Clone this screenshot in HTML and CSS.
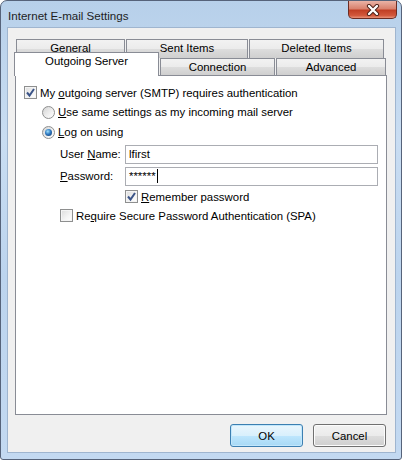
FILE: index.html
```html
<!DOCTYPE html>
<html lang="en">
<head>
<meta charset="UTF-8">
<title>Internet E-mail Settings</title>
<link rel="stylesheet" href="styles.css">
</head>
<body>

<div class="window">
  <div class="titlebar">
    <span class="title">Internet E-mail Settings</span>
    <div class="close">
      <svg width="16" height="12" viewBox="0 0 16 12">
        <path d="M4 2 L12 10 M12 2 L4 10" stroke="#4a1e16" stroke-width="4.2" stroke-linecap="round"/>
        <path d="M4 2 L12 10 M12 2 L4 10" stroke="#ffffff" stroke-width="2.4" stroke-linecap="round"/>
      </svg>
    </div>
  </div>

  <div class="client">
    <div class="tabs">
      <div class="tabrow back">
        <div class="tab t-general">General</div>
        <div class="tab t-sent">Sent Items</div>
        <div class="tab t-deleted">Deleted Items</div>
      </div>
      <div class="tabrow front">
        <div class="tab t-outgoing selected">Outgoing Server</div>
        <div class="tab t-connection">Connection</div>
        <div class="tab t-advanced">Advanced</div>
      </div>

      <div class="panel">
        <div class="line l-auth">
          <span class="chk checked">
            <svg width="11" height="11" viewBox="0 0 11 11"><path d="M2 5.5 L4.5 8.5 L9 2" fill="none" stroke="#3b5488" stroke-width="2"/></svg>
          </span>
          <span class="lbl">My <u>o</u>utgoing server (SMTP) requires authentication</span>
        </div>
        <div class="line l-radio">
          <span class="radio"></span>
          <span class="lbl"><u>U</u>se same settings as my incoming mail server</span>
        </div>
        <div class="line l-radio">
          <span class="radio on"><span class="dot"></span></span>
          <span class="lbl"><u>L</u>og on using</span>
        </div>
        <div class="field first">
          <label class="flabel">User <u>N</u>ame:</label>
          <div class="input">lfirst</div>
        </div>
        <div class="field">
          <label class="flabel"><u>P</u>assword:</label>
          <div class="input">******<span class="caret"></span></div>
        </div>
        <div class="line l-remember">
          <span class="chk checked">
            <svg width="11" height="11" viewBox="0 0 11 11"><path d="M2 5.5 L4.5 8.5 L9 2" fill="none" stroke="#3b5488" stroke-width="2"/></svg>
          </span>
          <span class="lbl"><u>R</u>emember password</span>
        </div>
        <div class="line l-spa">
          <span class="chk"></span>
          <span class="lbl">Re<u>q</u>uire Secure Password Authentication (SPA)</span>
        </div>
      </div>
    </div>

    <div class="buttons">
      <button class="btn default">OK</button>
      <button class="btn">Cancel</button>
    </div>
  </div>
</div>

</body>
</html>
```

FILE: styles.css
```css
body {
  margin: 0;
  font-family: "Liberation Sans", Arial, sans-serif;
  font-size: 11.4px;
  color: #000;
}
.window {
  width: 402px;
  height: 460px;
  box-sizing: border-box;
  border: 1px solid #56637a;
  border-radius: 7px 7px 3px 3px;
  padding: 0 5px 6px 6px;
  background: linear-gradient(to bottom, #b7d0ea 0%, #c9ddf2 30%, #bcd4ee 60%, #c3d9f1 100%);
}
.titlebar {
  height: 26px;
  display: flex;
  align-items: flex-start;
  justify-content: space-between;
}
.title {
  padding-left: 1px;
  margin-top: 8px;
  font-size: 11.6px;
  color: #1e1e1e;
}
.close {
  width: 47px;
  height: 17px;
  margin-right: -1px;
  border: 1px solid #6b2c23;
  border-top: none;
  border-radius: 0 0 5px 5px;
  background: linear-gradient(to bottom, #eab3a6 0%, #d9826e 45%, #c13f25 55%, #d2583c 85%, #e9937a 100%);
  display: flex;
  align-items: center;
  justify-content: center;
}
.client {
  height: 426px;
  box-sizing: border-box;
  border: 1px solid #9fb5cf;
  background: #f0f0f0;
  padding: 11px 8px 0 7px;
}

/* tabs */
.tabs {
  width: 372px;
}
.tabrow {
  display: flex;
  gap: 1px;
}
.tabrow.back {
  height: 19px;
  padding-left: 1px;
}
.tabrow.front {
  height: 17px;
  align-items: flex-end;
}
.tab {
  box-sizing: border-box;
  border: 1px solid #898c95;
  border-bottom: none;
  background: linear-gradient(to bottom, #f2f2f2 0%, #ebebeb 50%, #dddddd 51%, #cfcfcf 100%);
  text-align: center;
  height: 100%;
}
.tabrow.back .tab { line-height: 16px; }
.tabrow.front .tab { line-height: 16px; }
.t-general { width: 109px; }
.t-sent { width: 122px; }
.t-deleted { width: 135px; }
.t-outgoing { width: 145px; }
.t-connection { width: 115px; }
.t-advanced { width: 110px; }
.tab.selected {
  position: relative;
  z-index: 2;
  height: 24px;
  margin-left: -1px;
  margin-bottom: -1px;
  background: #fff;
  line-height: 21px;
}

.panel {
  height: 340px;
  box-sizing: border-box;
  border: 1px solid #898c95;
  background: #fff;
  padding: 7px 8px 0 8px;
  display: flex;
  flex-direction: column;
}
.line {
  display: flex;
  align-items: center;
  height: 19px;
}
.l-radio {
  height: 20px;
  padding-left: 18px;
}
.l-remember {
  padding-left: 101px;
}
.l-spa {
  padding-left: 36px;
}
.lbl {
  margin-left: 3px;
  white-space: nowrap;
}
.chk {
  width: 13px;
  height: 13px;
  box-sizing: border-box;
  border: 1px solid #8e8f8f;
  background: linear-gradient(135deg, #dcdcdc 0%, #f4f4f4 60%, #ffffff 100%);
  box-shadow: inset 0 0 0 1px #f4f4f4;
  display: flex;
  align-items: center;
  justify-content: center;
  flex-shrink: 0;
}
.radio {
  width: 13px;
  height: 13px;
  box-sizing: border-box;
  border: 1px solid #8e8f8f;
  border-radius: 50%;
  background: linear-gradient(135deg, #d4d4d4 0%, #f0f0f0 60%, #ffffff 100%);
  display: flex;
  align-items: center;
  justify-content: center;
  flex-shrink: 0;
}
.radio .dot {
  width: 7px;
  height: 7px;
  border-radius: 50%;
  background: radial-gradient(circle at 40% 35%, #9fe0fb 0%, #2f7ac2 45%, #0f3160 100%);
}
.field {
  display: flex;
  align-items: center;
  height: 22px;
  padding-left: 36px;
}
.field.first {
  margin-top: 1px;
}
.flabel {
  width: 65px;
  flex-shrink: 0;
}
.input {
  width: 253px;
  height: 19px;
  box-sizing: border-box;
  border: 1px solid #abadb3;
  background: #fff;
  padding-left: 3px;
  line-height: 17px;
  display: flex;
  align-items: center;
}
.caret {
  width: 1px;
  height: 14px;
  background: #000;
  margin-left: 1px;
}

/* dialog buttons */
.buttons {
  display: flex;
  justify-content: flex-end;
  gap: 10px;
  margin-top: 9px;
  margin-right: 1px;
}
.btn {
  width: 73px;
  height: 23px;
  font-family: inherit;
  font-size: 11.4px;
  border: 1px solid #707070;
  border-radius: 3px;
  background: linear-gradient(to bottom, #f2f2f2 0%, #ebebeb 50%, #dddddd 51%, #cfcfcf 100%);
  box-shadow: inset 0 0 0 1px #fcfcfc;
  padding: 0;
  color: #000;
}
.btn.default {
  border-color: #3c7fb1;
  background: linear-gradient(to bottom, #eaf6fd 0%, #d9f0fc 50%, #bee6fd 51%, #a7d9f5 100%);
  box-shadow: inset 0 0 0 1px #c2e7fc;
}
```
